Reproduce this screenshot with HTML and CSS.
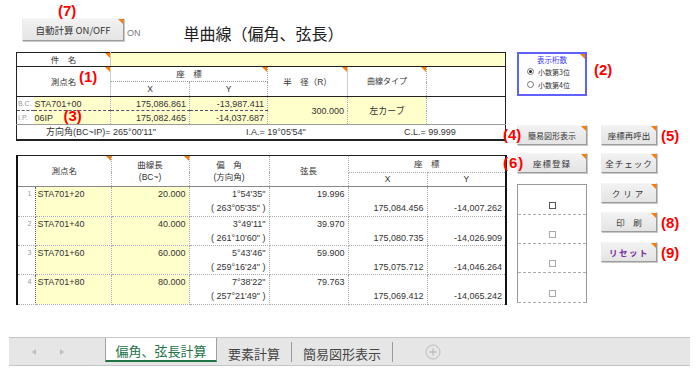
FILE: index.html
```html
<!DOCTYPE html>
<html lang="ja">
<head>
<meta charset="utf-8">
<title>単曲線（偏角、弦長）</title>
<link rel="stylesheet" href="styles.css">
</head>
<body>
<div class="page">
  <div class="sheet">
    <div class="left">
      <div class="topbar">
        <div class="btn btn-auto cm">自動計算 ON/OFF<span class="anno a7">(7)</span></div>
        <span class="on">ON</span>
        <h1 class="title">単曲線（偏角、弦長）</h1>
      </div>

      <table class="t1">
        <colgroup>
          <col class="w17"><col class="w77"><col class="w79"><col class="w78"><col class="w80"><col class="w79"><col class="w79">
        </colgroup>
        <tr class="h14">
          <td colspan="2" class="lbl cm ctr">件　名</td>
          <td colspan="5" class="yel"></td>
        </tr>
        <tr class="h15">
          <td colspan="2" rowspan="2" class="hd cm ctr sep-solid">測点名<span class="anno a1">(1)</span></td>
          <td colspan="2" class="hd cm ctr zh">座　標</td>
          <td rowspan="2" class="hd cm ctr sep-solid-r">半　径（R）</td>
          <td rowspan="2" class="hd cm ctr small">曲線タイプ</td>
          <td rowspan="2" class="hd"></td>
        </tr>
        <tr class="h15">
          <td class="hd ctr">X</td>
          <td class="hd ctr">Y</td>
        </tr>
        <tr class="h14 bc">
          <td class="pt">B.C.</td>
          <td class="yel nm">STA701+00</td>
          <td class="yel r">175,086.861</td>
          <td class="yel r">-13,987.411</td>
          <td rowspan="2" class="yel r mid">300.000</td>
          <td rowspan="2" class="yel ctr mid">左カーブ</td>
          <td rowspan="2" class="wh"></td>
        </tr>
        <tr class="h14 ip">
          <td class="pt">I.P.</td>
          <td class="yel nm">06IP<span class="anno a3">(3)</span></td>
          <td class="yel r">175,082.465</td>
          <td class="yel r">-14,037.687</td>
        </tr>
        <tr class="h15">
          <td colspan="7" class="info">
            <div class="info-row">
              <span class="i1">方向角(BC~IP)= 265°00'11"</span>
              <span class="i2">I.A.= 19°05'54"</span>
              <span class="i3">C.L.= 99.999</span>
            </div>
          </td>
        </tr>
      </table>

      <table class="t2">
        <colgroup>
          <col class="w18"><col class="w76"><col class="w78"><col class="w80"><col class="w79"><col class="w79"><col class="w79">
        </colgroup>
        <thead>
          <tr class="h17">
            <th colspan="2" rowspan="2" class="cm">測点名</th>
            <th rowspan="2" class="cm two">曲線長<br>(BC~)</th>
            <th rowspan="2" class="two">偏　角<br>(方向角)</th>
            <th rowspan="2">弦長</th>
            <th colspan="2" class="zh">座　標</th>
          </tr>
          <tr class="h14">
            <th>X</th>
            <th>Y</th>
          </tr>
        </thead>
        <tbody>
          <tr class="d30">
            <td class="no">1</td>
            <td class="yel nm">STA701+20</td>
            <td class="yel r">20.000</td>
            <td class="r">1°54'35"<br>( 263°05'35" )</td>
            <td class="r">19.996</td>
            <td class="r lo">175,084.456</td>
            <td class="r lo">-14,007.262</td>
          </tr>
          <tr class="d29">
            <td class="no">2</td>
            <td class="yel nm">STA701+40</td>
            <td class="yel r">40.000</td>
            <td class="r">3°49'11"<br>( 261°10'60" )</td>
            <td class="r">39.970</td>
            <td class="r lo">175,080.735</td>
            <td class="r lo">-14,026.909</td>
          </tr>
          <tr class="d29">
            <td class="no">3</td>
            <td class="yel nm">STA701+60</td>
            <td class="yel r">60.000</td>
            <td class="r">5°43'46"<br>( 259°16'24" )</td>
            <td class="r">59.900</td>
            <td class="r lo">175,075.712</td>
            <td class="r lo">-14,046.264</td>
          </tr>
          <tr class="d30">
            <td class="no">4</td>
            <td class="yel nm">STA701+80</td>
            <td class="yel r">80.000</td>
            <td class="r">7°38'22"<br>( 257°21'49" )</td>
            <td class="r">79.763</td>
            <td class="r lo">175,069.412</td>
            <td class="r lo">-14,065.242</td>
          </tr>
        </tbody>
      </table>
    </div>

    <div class="midcol">
      <div class="dispbox cm">
        <div class="db-title">表示桁数</div>
        <div class="radio-row"><span class="radio on-r"></span>小数第3位</div>
        <div class="radio-row"><span class="radio"></span>小数第4位</div>
        <span class="anno a2">(2)</span>
      </div>
      <div class="btn btn-m cm b-zukei">簡易図形表示<span class="anno a4">(4)</span></div>
      <div class="btn btn-m cm b-touroku">座標登録<span class="anno a6">(6)</span></div>
      <div class="checks">
        <div class="ck c30"><span class="box dark"></span></div>
        <div class="ck c29"><span class="box"></span></div>
        <div class="ck c29"><span class="box"></span></div>
        <div class="ck c30"><span class="box"></span></div>
      </div>
    </div>

    <div class="rightcol">
      <div class="brow r1"><div class="btn btn-s cm">座標再呼出</div><span class="anno-f">(5)</span></div>
      <div class="brow r2"><div class="btn btn-s cm sp1">全チェック</div></div>
      <div class="brow r3"><div class="btn btn-s cm sp3">クリア</div></div>
      <div class="brow r4"><div class="btn btn-s cm">印　刷</div><span class="anno-f">(8)</span></div>
      <div class="brow r5"><div class="btn btn-s cm reset">リセット</div><span class="anno-f">(9)</span></div>
    </div>
  </div>

  <div class="tabs">
    <div class="nav">
      <span class="arr arr-l"></span>
      <span class="arr arr-r"></span>
    </div>
    <div class="tab active">偏角、弦長計算</div>
    <div class="tab t-youso">要素計算</div>
    <span class="tsep"></span>
    <div class="tab t-kan">簡易図形表示</div>
    <span class="tsep"></span>
    <div class="plus"><svg width="16" height="16" viewBox="0 0 16 16"><circle cx="8" cy="8" r="7" fill="none" stroke="#bdbdbd" stroke-width="1"/><path d="M8 4.5v7M4.5 8h7" stroke="#bdbdbd" stroke-width="1.3"/></svg></div>
  </div>
</div>
</body>
</html>
```

FILE: styles.css
```css
* { box-sizing: border-box; }
html, body { margin: 0; padding: 0; }
body {
  width: 700px;
  height: 384px;
  overflow: hidden;
  background: #fff;
  font-family: "Liberation Sans", "Noto Sans CJK JP", sans-serif;
  color: #333;
}
.page { display: flex; flex-direction: column; height: 384px; }
.sheet { display: flex; height: 337px; padding-left: 16px; }
.left { width: 489px; display: flex; flex-direction: column; }

/* top bar */
.topbar { height: 52px; display: flex; align-items: flex-start; padding-left: 6px; }
.btn {
  position: relative;
  display: flex;
  align-items: center;
  justify-content: center;
  background: linear-gradient(#f2f2f2, #e4e4e4);
  border: 1px solid;
  border-color: #f6f6f6 #9c9c9c #9c9c9c #ececec;
  box-shadow: 1px 1px 0 #c8c8c8;
  font-family: "Noto Sans CJK JP", sans-serif;
  font-size: 8.5px;
  color: #333;
  white-space: nowrap;
}
.btn-auto { width: 102px; height: 23px; margin-top: 18px; font-size: 9.5px; }
.on { margin: 27px 0 0 3px; font-size: 9px; line-height: 12px; color: #777; }
.title {
  margin: 22px 0 0 43px;
  font-family: "Noto Sans CJK JP", sans-serif;
  font-size: 16px;
  font-weight: normal;
  line-height: 22px;
  color: #222;
}

/* annotations */
.anno {
  position: absolute;
  font-family: "Liberation Sans", sans-serif;
  font-weight: bold;
  font-size: 15px;
  line-height: 15px;
  color: #f00;
  white-space: nowrap;
}
.a7 { left: 35px; top: -16px; }
.a1 { left: 62px; top: 2px; }
.a3 { left: 30px; top: -3px; }
.a2 { left: 75px; top: 8px; }
.a4 { left: -15px; top: 1px; }
.a6 { left: -15px; top: 1px; }
.anno-f {
  margin-left: 4px;
  font-family: "Liberation Sans", sans-serif;
  font-weight: bold;
  font-size: 15px;
  line-height: 15px;
  color: #f00;
}

/* comment marker */
.cm::after {
  content: "";
  position: absolute;
  top: 0;
  right: 0;
  width: 0;
  height: 0;
  border-top: 5px solid #ff7a00;
  border-left: 5px solid transparent;
}

/* tables */
table { border-collapse: collapse; table-layout: fixed; }
td, th { padding: 0; position: relative; font-weight: normal; }
.w17 { width: 17px; } .w18 { width: 18px; }
.w76 { width: 76px; } .w77 { width: 77px; } .w78 { width: 78px; }
.w79 { width: 79px; } .w80 { width: 80px; }
.ctr { text-align: center; }
.r { text-align: right; padding-right: 3px; }
.yel { background: #ffffcc; }
.wh { background: #fff; }
.mid { vertical-align: middle; }

.t1 {
  width: 489px;
  border: 1px solid #222;
  border-bottom: 2px solid #222;
  font-size: 9px;
}
.t1 td { border: 1px dotted #aaa; line-height: 12px; vertical-align: middle; }
.t1 .h14 td { height: 14px; }
.t1 .h15 td { height: 15px; }
.t1 tr:first-child td { border-bottom: 1px solid #222; }
.t1 .lbl { border-right: 1px solid #ccc; font-size: 8.5px; }
.t1 .hd { font-size: 8.5px; }
.t1 .small { font-size: 8px; }
.t1 .zh { border-bottom: 1px dotted #999; }
.t1 .sep-solid { border-right: 1px solid #ccc; border-bottom: 1px solid #222; }
.t1 .sep-solid-r { border-right: 1px solid #ccc; }
.t1 tr:nth-child(3) td { border-bottom: 1px solid #222; }
.t1 tr:nth-child(2) td[rowspan] { border-bottom: 1px solid #222; }
.t1 .bc td { border-bottom: 1px dashed #555; }
.t1 .bc td[rowspan] { border-bottom: 1px solid #999; }
.t1 .ip td { border-bottom: 1px solid #999; }
.t1 .pt { color: #999; font-size: 7px; padding-left: 1px; border-right: none; }
.t1 .nm { padding-left: 1px; border-left: none; }
.t1 .info { border: none; border-top: 1px solid #999; font-size: 9px; }
.info-row { display: flex; padding-left: 29px; white-space: nowrap; }
.i1 { width: 200px; }
.i2 { width: 158px; }

.t2 {
  width: 489px;
  margin-top: 14px;
  border-top: 1px solid #222;
  border-left: 2px solid #111;
  border-right: 2px solid #111;
  border-bottom: 1px dotted #999;
  font-size: 9px;
}
.t2 th {
  border: 1px dotted #aaa;
  border-bottom: 1px solid #888;
  font-size: 8.5px;
  line-height: 12px;
  text-align: center;
  vertical-align: middle;
  color: #333;
}
.t2 .h17 th { height: 17px; }
.t2 .h14 th { height: 14px; }
.t2 th.zh { border-bottom: 1px dotted #aaa; }
.t2 td {
  border: 1px dotted #aaa;
  line-height: 14px;
  vertical-align: top;
}
.t2 .d30 td { height: 30px; }
.t2 .d29 td { height: 29px; }
.t2 .no {
  color: #999;
  font-size: 7px;
  text-align: right;
  padding-right: 3px;
  border-right: 1px dotted #555;
}
.t2 .nm { padding-left: 2px; }
.t2 .lo { padding-top: 14px; }

/* middle column */
.midcol {
  width: 70px;
  margin-left: 12px;
  display: flex;
  flex-direction: column;
  padding-top: 52px;
}
.dispbox {
  position: relative;
  height: 44px;
  border: 2px solid #6060ff;
  font-family: "Noto Sans CJK JP", sans-serif;
}
.db-title { text-align: center; font-size: 7.5px; line-height: 11px; color: #3a3aff; }
.radio-row {
  display: flex;
  align-items: center;
  height: 13px;
  padding-left: 8px;
  font-size: 7px;
  color: #333;
}
.radio {
  width: 7px;
  height: 7px;
  border: 1px solid #777;
  border-radius: 50%;
  margin-right: 4px;
  background: #fff;
  display: flex;
  align-items: center;
  justify-content: center;
}
.radio.on-r::before {
  content: "";
  width: 3px;
  height: 3px;
  border-radius: 50%;
  background: #222;
}
.btn-m { width: 70px; height: 20px; }
.b-zukei { margin-top: 29px; font-size: 8px; }
.b-touroku { margin-top: 8px; letter-spacing: 1px; }
.checks { margin-top: 11px; border: 1px solid #999; border-bottom: none; }
.ck {
  display: flex;
  justify-content: center;
  align-items: flex-end;
  padding-bottom: 5px;
  border-bottom: 1px dashed #aaa;
}
.c30 { height: 30px; }
.c29 { height: 29px; }
.box { width: 7px; height: 7px; border: 1px solid #aaa; background: #fff; }
.box.dark { border-color: #555; }

/* right column */
.rightcol {
  margin-left: 14px;
  display: flex;
  flex-direction: column;
  padding-top: 125px;
}
.brow { display: flex; align-items: center; height: 20px; }
.r2 { margin-top: 8px; }
.r3 { margin-top: 10px; }
.r4 { margin-top: 9px; }
.r5 { margin-top: 10px; }
.btn-s { width: 56px; height: 20px; }
.sp1 { letter-spacing: 1px; }
.sp3 { letter-spacing: 3px; }
.reset { color: #7a2aa0; letter-spacing: 1.5px; font-weight: bold; }

/* sheet tabs */
.tabs {
  height: 29px;
  margin: 0 10px 0 9px;
  background: #e6e6e6;
  border-top: 1px solid #c6c6c6;
  border-bottom: 1px solid #c6c6c6;
  display: flex;
  align-items: flex-start;
  font-family: "Noto Sans CJK JP", sans-serif;
  font-size: 13px;
}
.nav { width: 96px; height: 27px; display: flex; align-items: center; }
.arr { width: 0; height: 0; border-top: 3.5px solid transparent; border-bottom: 3.5px solid transparent; }
.arr-l { margin-left: 23px; border-right: 4px solid #bdbdbd; }
.arr-r { margin-left: 24px; border-left: 4px solid #bdbdbd; }
.tab {
  height: 24px;
  display: flex;
  align-items: center;
  justify-content: center;
  padding-top: 3px;
  color: #444;
  line-height: 1;
}
.tab.active {
  width: 112px;
  background: #fff;
  color: #217346;
  border-left: 1px solid #a0a0a0;
  border-right: 1px solid #a0a0a0;
  border-bottom: 2px solid #217346;
  height: 24px;
}
.t-youso { width: 74px; height: 27px; }
.t-kan { width: 100px; height: 27px; }
.tsep { width: 1px; height: 20px; margin-top: 4px; background: #9a9a9a; }
.plus { margin-left: 32px; height: 27px; display: flex; align-items: center; }
.plus svg { display: block; }
```
